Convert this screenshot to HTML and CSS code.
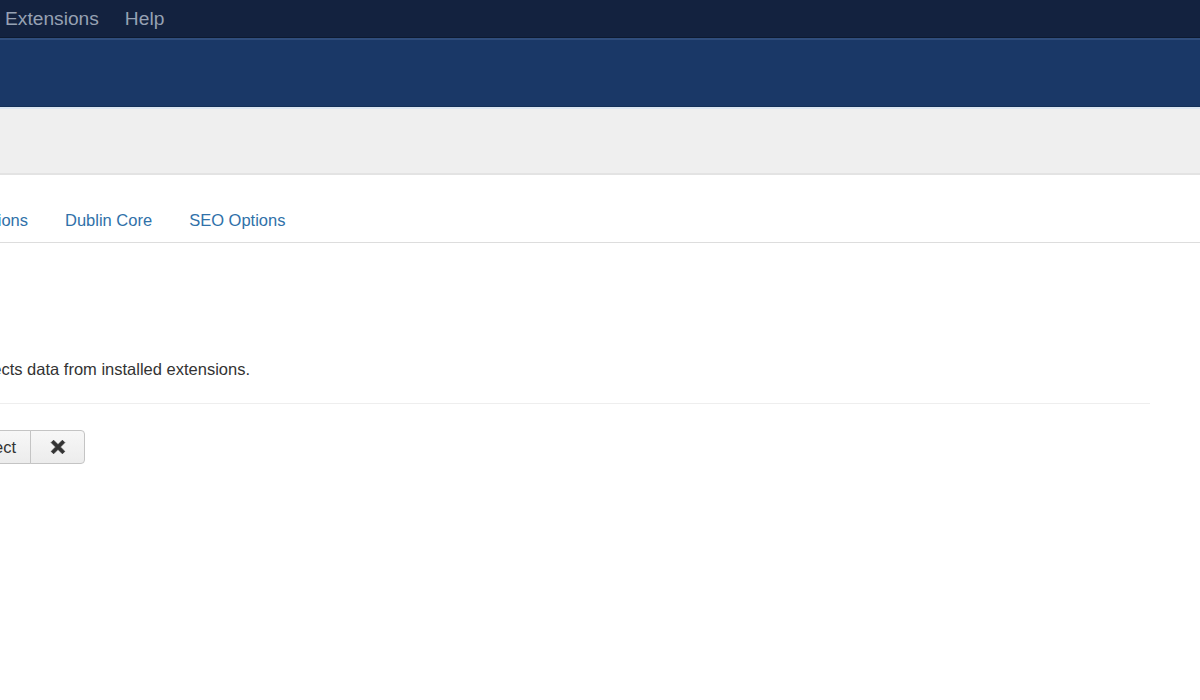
FILE: index.html
```html
<!DOCTYPE html>
<html lang="en">
<head>
<meta charset="utf-8">
<title>Plugins: SEO</title>
<link rel="stylesheet" href="styles.css">
</head>
<body>
<nav class="navbar">
  <ul class="menu">
    <li class="menu-item">Extensions</li>
    <li class="menu-item">Help</li>
  </ul>
</nav>
<header class="header"></header>
<div class="toolbar"></div>
<main class="content">
  <ul class="tabs">
    <li class="tab tab-clip"><a class="tab-link">Options</a></li>
    <li class="tab"><a class="tab-link">Dublin Core</a></li>
    <li class="tab"><a class="tab-link">SEO Options</a></li>
  </ul>
  <div class="pane">
    <div class="desc-clip"><p class="desc">This plugin collects data from installed extensions.</p></div>
    <hr class="rule">
    <div class="btn-group">
      <div class="btn-clip"><span class="btn btn-select">Select</span></div>
      <span class="btn btn-clear">
        <svg class="icon-x" viewBox="0 0 18 18" width="18" height="18" aria-hidden="true">
          <path d="M2.2 4.6 L4.6 2.2 L9 6.6 L13.4 2.2 L15.8 4.6 L11.4 9 L15.8 13.4 L13.4 15.8 L9 11.4 L4.6 15.8 L2.2 13.4 L6.6 9 Z" fill="#333" stroke="#333" stroke-width="0.8" stroke-linejoin="round"/>
        </svg>
      </span>
    </div>
  </div>
</main>
</body>
</html>
```

FILE: styles.css
```css
html, body {
  margin: 0;
  padding: 0;
  background: #fff;
  overflow: hidden;
  font-family: "Liberation Sans", Arial, sans-serif;
  color: #333;
}

.navbar {
  height: 37px;
  background: #13223f;
  border-bottom: 1px solid #0d1a30;
}

.menu {
  display: flex;
  list-style: none;
  margin: 0 0 0 -8px;
  padding: 0;
}

.menu-item {
  padding: 0 13px;
  font-size: 19.2px;
  line-height: 37px;
  color: #96a1b3;
  white-space: nowrap;
}

.header {
  height: 66px;
  background: #1a3867;
  border-top: 2px solid #2f4d7c;
  border-bottom: 1px solid #143058;
}

.toolbar {
  height: 64px;
  background: #efefef;
  border-top: 2px solid #dce6f2;
  border-bottom: 2px solid #e3e3e3;
}

.tabs {
  display: flex;
  list-style: none;
  margin: 23px 0 0;
  padding: 0;
  border-bottom: 1px solid #dddddd;
}

.tab {
  display: flex;
}

.tab + .tab {
  margin-left: 1px;
}

.tab-clip {
  width: 46px;
  justify-content: flex-end;
  overflow: hidden;
}

.tab-link {
  display: block;
  padding: 10px 18px;
  font-size: 16.5px;
  line-height: 24px;
  color: #3071a9;
  white-space: nowrap;
}

.pane {
  width: 1150px;
  padding-top: 114px;
}

.desc-clip {
  width: 250px;
  display: flex;
  justify-content: flex-end;
  overflow: hidden;
}

.desc {
  margin: 0;
  font-size: 16.5px;
  line-height: 24px;
  white-space: nowrap;
}

.rule {
  margin: 22px 0 0;
  border: 0;
  border-top: 1px solid #eeeeee;
  height: 0;
}

.btn-group {
  display: flex;
  margin-top: 26px;
  height: 34px;
}

.btn {
  display: flex;
  align-items: center;
  box-sizing: border-box;
  height: 34px;
  background: linear-gradient(#f7f7f7, #ececec);
  border: 1px solid #c4c4c4;
  font-size: 16.5px;
  color: #333;
  white-space: nowrap;
}

.btn-clip {
  width: 31px;
  display: flex;
  justify-content: flex-end;
  overflow: hidden;
  flex: none;
}

.btn-select {
  padding: 0 14px 0 16px;
  border-radius: 4px 0 0 4px;
}

.btn-clear {
  width: 55px;
  justify-content: center;
  margin-left: -1px;
  border-radius: 0 4px 4px 0;
}

.icon-x {
  display: block;
}
```
